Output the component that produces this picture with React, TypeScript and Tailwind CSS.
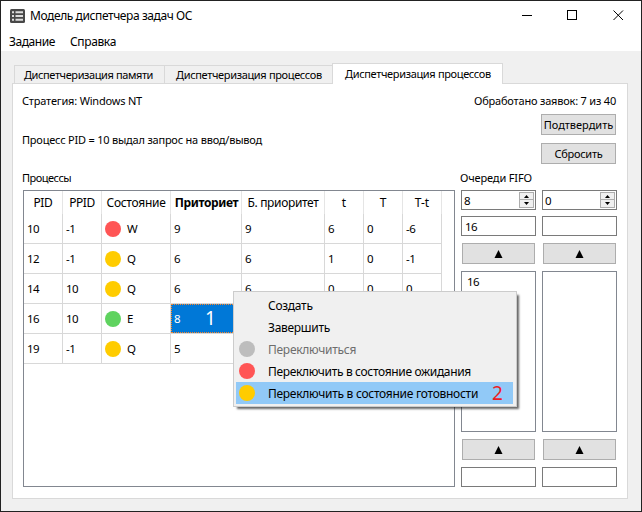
import type { ReactNode } from "react";

type State = "W" | "Q" | "E";

const dotColor: Record<State, string> = {
  W: "bg-[#ff5555]",
  Q: "bg-[#ffcc00]",
  E: "bg-[#5fd35f]",
};

const rows: { pid: number; ppid: number; state: State; prio: number; rest: (number | null)[] }[] = [
  { pid: 10, ppid: -1, state: "W", prio: 9, rest: [9, 6, 0, -6] },
  { pid: 12, ppid: -1, state: "Q", prio: 6, rest: [6, 1, 0, -1] },
  { pid: 14, ppid: 10, state: "Q", prio: 6, rest: [6, 0, 0, 0] },
  { pid: 16, ppid: 10, state: "E", prio: 8, rest: [null, null, null, null] },
  { pid: 19, ppid: -1, state: "Q", prio: 5, rest: [null, null, null, null] },
];

const headers: [string, string][] = [
  ["PID", "tracking-[-0.3px]"],
  ["PPID", "tracking-[-0.5px]"],
  ["Состояние", "tracking-[-0.28px]"],
  ["Приториет", "pl-px font-bold tracking-[-0.4px]"],
  ["Б. приоритет", "tracking-[-0.35px]"],
  ["t", ""],
  ["T", ""],
  ["T-t", ""],
];

const grid = "grid w-[418px] grid-cols-[39px_39px_69px_71px_83px_39px_39px_39px]";

function Cell({ children }: { children: ReactNode }) {
  return <div className="flex items-center border-r border-b border-[#d8d8d8] pl-[3px]">{children}</div>;
}

function Button({ children, className }: { children: ReactNode; className: string }) {
  return (
    <div className={`flex h-[21px] items-center justify-center border border-[#adadad] bg-[#e1e1e1] ${className}`}>
      {children}
    </div>
  );
}

function Triangle() {
  return (
    <svg width="9" height="8" viewBox="0 0 9 8">
      <path d="M4.5 0 8.5 8H.5Z" fill="#000" />
    </svg>
  );
}

function Spin({ value }: { value: string }) {
  return (
    <div className="flex h-5 items-center justify-between border border-[#7a7a7a] bg-white pr-px pl-[2px] text-[11.5px]">
      <span className="pt-px">{value}</span>
      <div className="flex h-4 w-[15px] flex-col border border-[#adadad] bg-[#f0f0f0]">
        <div className="flex h-[7px] items-center justify-center border-b border-[#adadad]">
          <svg width="5" height="3" viewBox="0 0 5 3">
            <path d="M2.5 0 5 3H0Z" />
          </svg>
        </div>
        <div className="flex h-[7px] items-center justify-center">
          <svg width="5" height="3" viewBox="0 0 5 3">
            <path d="M0 0h5L2.5 3Z" />
          </svg>
        </div>
      </div>
    </div>
  );
}

function Edit({ value }: { value?: string }) {
  return (
    <div className="flex h-5 items-center border border-[#7a7a7a] bg-white pt-[2px] pl-[3px] text-[11.5px] tracking-[-0.7px]">
      {value}
    </div>
  );
}

function Queue({ prio, head, items }: { prio: string; head?: string; items: string[] }) {
  return (
    <div className="flex w-[75px] flex-col">
      <Spin value={prio} />
      <div className="mt-[6px]">
        <Edit value={head} />
      </div>
      <Button className="mr-px ml-px mt-[7px]">
        <Triangle />
      </Button>
      <div className="mt-[7px] h-[161px] border border-[#828790] bg-white pt-[2px] pl-[5px] text-[11.5px] leading-[15px] tracking-[-0.7px]">
        {items.map((i) => (
          <div key={i}>{i}</div>
        ))}
      </div>
      <Button className="mr-px ml-px mt-[7px]">
        <Triangle />
      </Button>
      <div className="mt-[7px]">
        <Edit />
      </div>
    </div>
  );
}

function MenuItem({ dot, className, children }: { dot?: string; className?: string; children: ReactNode }) {
  return (
    <div className={`flex h-[22px] items-center pl-[3px] ${className ?? ""}`}>
      <div className={`mr-[13px] h-4 w-4 rounded-full ${dot ?? ""}`} />
      <div className="flex h-full items-center pt-[2px]">{children}</div>
    </div>
  );
}

export default function App() {
  return (
    <div className="relative flex h-[512px] w-[642px] flex-col overflow-hidden border border-[#222222] bg-[#f0f0f0] font-['Noto_Sans','Open_Sans',sans-serif] text-[11px] whitespace-nowrap text-black">
      <div className="flex h-[29px] shrink-0 items-center bg-white pr-[17px] pl-[9px]">
        <svg width="15" height="14" viewBox="0 0 15 14">
          <rect width="15" height="14" rx="1.5" fill="#484848" />
          <path d="M2 2.2h2v2H2zM5.5 2.2H13v2H5.5zM2 6h2v2H2zM5.5 6H13v2H5.5zM2 9.8h2v2H2zM5.5 9.8H13v2H5.5z" fill="#dcdcdc" />
        </svg>
        <span className="ml-[5px] grow pt-px text-[12px] tracking-[-0.41px]">Модель диспетчера задач ОС</span>
        <svg width="102" height="11" viewBox="0 0 102 11" fill="none" stroke="#000" shapeRendering="crispEdges">
          <path d="M0 5.5h10M45.5 .5h9v9h-9z" />
          <path d="m91.5.5 9.5 9.5M101 .5 91.5 10" shapeRendering="auto" />
        </svg>
      </div>
      <div className="flex h-[21px] shrink-0 items-center gap-[15px] bg-white pt-[3px] pl-2 text-[12px]">
        <span className="tracking-[-0.43px]">Задание</span>
        <span className="tracking-[-0.36px]">Справка</span>
      </div>

      <div className="mt-3 ml-[13px] flex h-5 shrink-0 items-end">
        <div className="flex h-[18px] w-[150px] items-center border-t border-l border-[#d9d9d9] pl-[9px] tracking-[-0.4px]">
          <span className="pt-px">Диспетчеризация памяти</span>
        </div>
        <div className="flex h-[18px] w-[168px] items-center border-t border-l border-[#d9d9d9] pl-[11px] tracking-[-0.34px]">
          <span className="pt-px">Диспетчеризация процессов</span>
        </div>
        <div className="z-10 -mb-px flex h-[21px] w-[171px] items-center border border-b-0 border-[#d9d9d9] bg-white pl-3 tracking-[-0.34px]">
          Диспетчеризация процессов
        </div>
      </div>

      <div className="ml-[11px] flex h-[416px] w-[616px] shrink-0 flex-col border border-[#d9d9d9] bg-white px-[10px]">
        <div className="flex h-[84px] justify-between">
          <div className="-ml-px flex flex-col pt-[9px] leading-4">
            <span className="tracking-[-0.19px]">Стратегия: Windows NT</span>
            <span className="mt-[23px] tracking-[-0.21px]">Процесс PID = 10 выдал запрос на ввод/вывод</span>
          </div>
          <div className="mr-px flex flex-col items-end pt-[9px] leading-4">
            <span className="tracking-[-0.2px]">Обработано заявок: 7 из 40</span>
            <Button className="mt-[5px] w-[75px]">Подтвердить</Button>
            <Button className="mt-2 w-[75px] tracking-[-0.28px]">Сбросить</Button>
          </div>
        </div>
        <div className="flex gap-[6px]">
          <div className="w-[432px] shrink-0">
            <div className="-ml-px flex h-[22px] items-center pb-[2px] tracking-[-0.5px]">Процессы</div>
            <div className="h-[297px] border border-[#828790]">
              <div className={`${grid} h-[23px] text-[12px]`}>
                {headers.map(([h, cls]) => (
                  <div key={h} className="flex items-center justify-center border-r border-[#e5e5e5]">
                    <span className={cls}>{h}</span>
                  </div>
                ))}
              </div>
              {rows.map((r) => (
                <div key={r.pid} className={`${grid} h-[30px] text-[11.5px] tracking-[-0.5px]`}>
                  <Cell>{r.pid}</Cell>
                  <Cell>{r.ppid}</Cell>
                  <Cell>
                    <div className={`mr-[6px] h-4 w-4 rounded-full ${dotColor[r.state]}`} />
                    {r.state}
                  </Cell>
                  {r.pid === 16 ? (
                    <div className="border-r border-b border-[#d8d8d8]">
                      <div className="flex h-full items-center border border-dotted border-[#ff8728] bg-[#0078d7] pl-[2px] text-white">
                        8<span className="ml-[25px] text-[19px] leading-none">1</span>
                      </div>
                    </div>
                  ) : (
                    <Cell>{r.prio}</Cell>
                  )}
                  {r.rest.map((v, i) => (
                    <Cell key={i}>{v}</Cell>
                  ))}
                </div>
              ))}
            </div>
          </div>
          <div className="shrink-0">
            <div className="-ml-px flex h-[22px] items-center pb-[2px] tracking-[-0.14px]">Очереди FIFO</div>
            <div className="flex gap-[6px]">
              <Queue prio="8" head="16" items={["16"]} />
              <Queue prio="0" items={[]} />
            </div>
          </div>
        </div>
      </div>

      <div className="absolute top-[290px] left-[232px] z-20 h-[116px] w-[284px] border border-[#cccccc] bg-[#f0f0f0] py-[2px] pr-[3px] pl-[2px] text-[12px] shadow-[3px_3px_2px_-1px_rgba(0,0,0,0.6)]">
        <MenuItem className="tracking-[-0.28px]">Создать</MenuItem>
        <MenuItem className="tracking-[-0.28px]">Завершить</MenuItem>
        <MenuItem dot="bg-[#bdbdbd]" className="tracking-[-0.27px] text-[#6d6d6d]">Переключиться</MenuItem>
        <MenuItem dot="bg-[#ff5555]" className="tracking-[-0.34px]">Переключить в состояние ожидания</MenuItem>
        <MenuItem dot="bg-[#ffcc00]" className="bg-[#91c9f7] tracking-[-0.28px]">
          Переключить в состояние готовности
          <span className="-mt-px ml-[14px] text-[19px] leading-none text-[#ed1c24]">2</span>
        </MenuItem>
      </div>
    </div>
  );
}
